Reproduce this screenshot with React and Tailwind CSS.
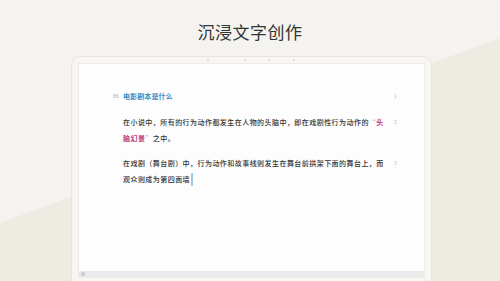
import React from "react";

const cjk = { fontFamily: '"Noto Sans CJK SC", "Noto Sans", sans-serif' };

const Row = ({ label, num, children, className = "" }) => (
  <div className={`flex ${className}`}>
    <div className="w-[44px] shrink-0 flex justify-end pr-[4px]">
      {label && (
        <span className="text-[4.5px] leading-[16px] font-bold text-[#b9b9b9]">{label}</span>
      )}
    </div>
    <div className="w-[271px] shrink-0">{children}</div>
    <div className="text-[5px] leading-[16px] text-[#c9c9c9]">{num}</div>
  </div>
);

export default function App() {
  return (
    <div className="relative w-[500px] h-[281px] overflow-hidden bg-[#f4f3ef]" style={cjk}>
      {/* diagonal backdrop */}
      <svg className="absolute inset-0" width="500" height="281" viewBox="0 0 500 281">
        <polygon points="0,223 500,38 500,281 0,281" fill="#eeebe3" />
      </svg>

      <div className="relative flex flex-col">
        <h1 className="pt-[21px] mb-[13px] text-center text-[17px] leading-[22px] font-normal tracking-[0.5px] text-[#333333]">
          沉浸文字创作
        </h1>

        {/* tablet frame */}
        <div className="ml-[71px] w-[361px] h-[240px] rounded-t-[9px] border border-[#e7e5df] bg-[#f7f6f2] px-[6px]">
          <div className="relative h-[6px]">
            <span className="absolute left-[129px] top-[2px] w-[2px] h-[2px] rounded-full bg-[#d6d5d1]" />
            <span className="absolute left-[166px] top-[2px] w-[2px] h-[2px] rounded-full bg-[#d6d5d1]" />
            <span className="absolute left-[190px] top-[2px] w-[2px] h-[2px] rounded-full bg-[#d6d5d1]" />
            <span className="absolute left-[215px] top-[2px] w-[2px] h-[2px] rounded-full bg-[#d6d5d1]" />
          </div>

          {/* screen */}
          <div className="h-[215px] flex flex-col border border-[#ecebe6] bg-[#fdfdfd]">
            <div className="flex-1 pt-[24px] text-[7px] leading-[16px] font-medium text-[#333333]">
              <Row label="H1" num="1">
                <span className="font-bold tracking-[0.1px] text-[#3a8dc5]">电影剧本是什么</span>
              </Row>

              <Row num="2" className="mt-[10px]">
                <div className="whitespace-nowrap tracking-[0.45px]">
                  在小说中，所有的行为动作都发生在人物的头脑中，即在戏剧性行为动作的
                  <span className="text-[#dcb0c6]">“</span>
                  <span className="font-bold text-[#c23a7b]">头</span>
                </div>
                <div className="whitespace-nowrap tracking-[0.45px]">
                  <span className="font-bold text-[#c23a7b]">脑幻景</span>
                  <span className="text-[#dcb0c6]">”</span>
                  之中。
                </div>
              </Row>

              <Row num="3" className="mt-[9px]">
                <div className="whitespace-nowrap tracking-[0.45px]">
                  在戏剧（舞台剧）中，行为动作和故事线则发生在舞台前拱架下面的舞台上，而
                </div>
                <div className="flex items-center whitespace-nowrap tracking-[0.45px]">
                  观众则成为第四面墙
                  <span className="ml-[1px] w-[2px] h-[13px] bg-[#9fc8e4]" />
                </div>
              </Row>
            </div>

            {/* scroll bar */}
            <div className="h-[6px] flex items-center bg-[#ebebeb] pl-[2px]">
              <span className="w-[4px] h-[4px] bg-[#cfcfcf]" />
            </div>
          </div>
        </div>
      </div>
    </div>
  );
}
